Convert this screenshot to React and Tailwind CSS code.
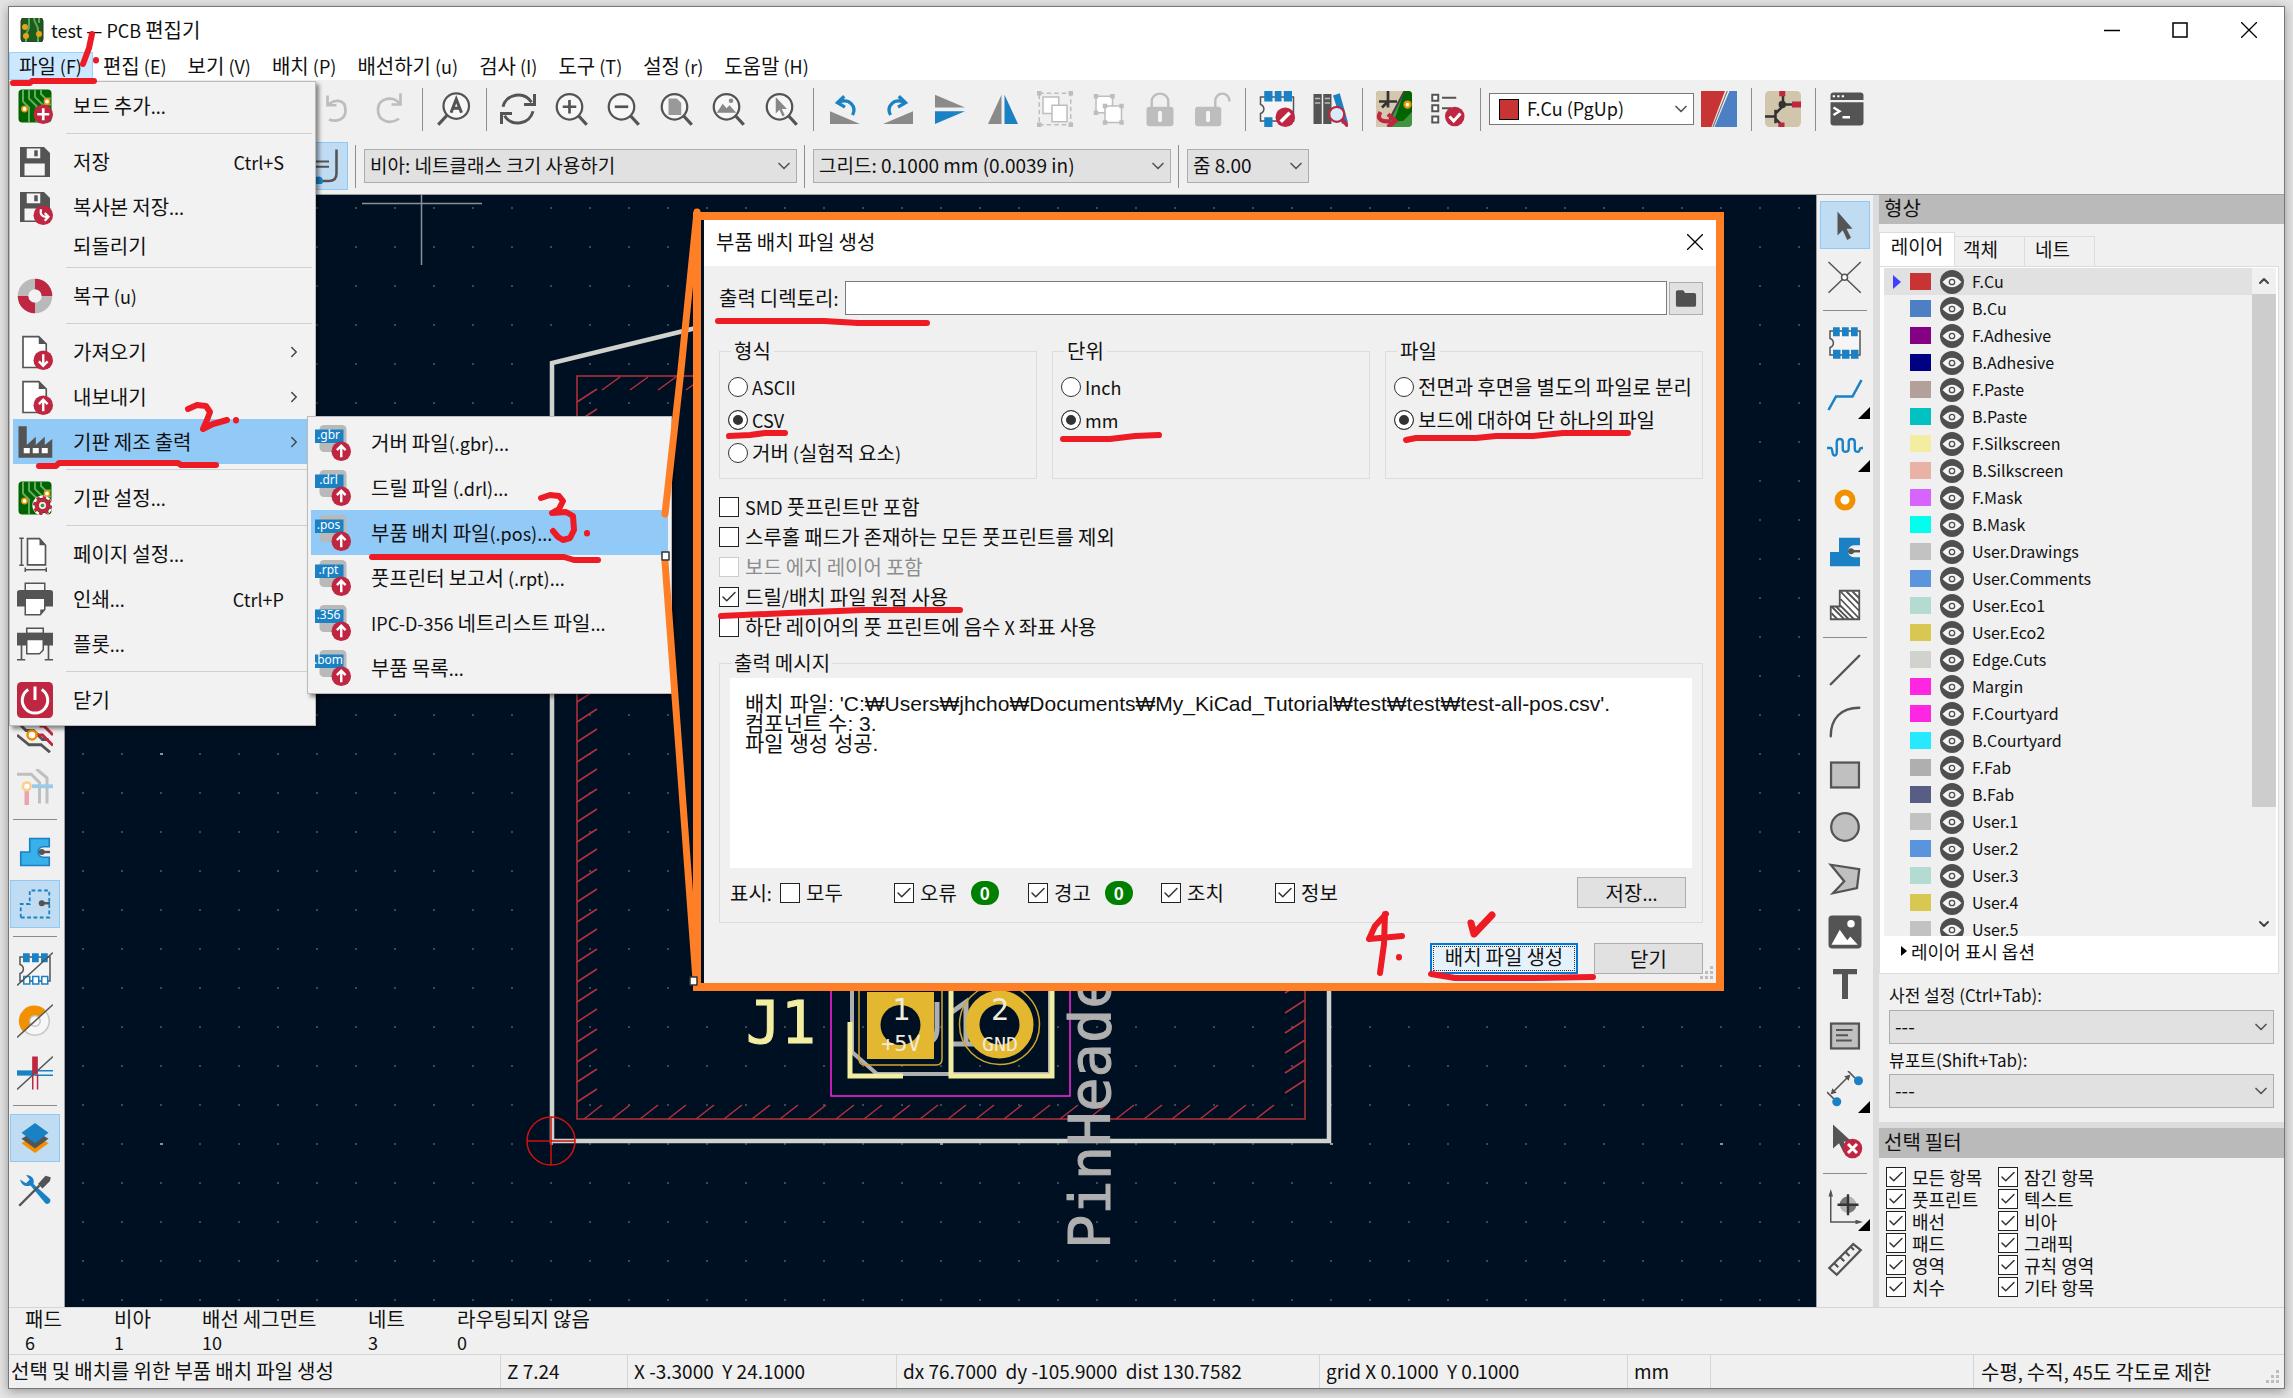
import React from 'react';
import { Check, ChevronDown, ChevronRight, ChevronUp } from 'lucide-react';

const GREY = '#545454';
const BLUE = '#1a81c4';
const RED = '#bf2641';
const ORANGE = '#f29100';

const menus = ['파일 (F)', '편집 (E)', '보기 (V)', '배치 (P)', '배선하기 (u)', '검사 (I)', '도구 (T)', '설정 (r)', '도움말 (H)'];

const layers = [
  ['F.Cu', '#c83434'],
  ['B.Cu', '#4d7fc4'],
  ['F.Adhesive', '#840084'],
  ['B.Adhesive', '#000084'],
  ['F.Paste', '#b4a09a'],
  ['B.Paste', '#00c2c2'],
  ['F.Silkscreen', '#f2eda1'],
  ['B.Silkscreen', '#e8b2a7'],
  ['F.Mask', '#d864ff'],
  ['B.Mask', '#02ffee'],
  ['User.Drawings', '#c2c2c2'],
  ['User.Comments', '#5994dc'],
  ['User.Eco1', '#b4dbd2'],
  ['User.Eco2', '#d8c852'],
  ['Edge.Cuts', '#d0d2cd'],
  ['Margin', '#ff26e2'],
  ['F.Courtyard', '#ff26e2'],
  ['B.Courtyard', '#26e9ff'],
  ['F.Fab', '#afafaf'],
  ['B.Fab', '#585d84'],
  ['User.1', '#c2c2c2'],
  ['User.2', '#5994dc'],
  ['User.3', '#b4dbd2'],
  ['User.4', '#d8c852'],
  ['User.5', '#c2c2c2'],
];

const filters = ['모든 항목', '잠긴 항목', '풋프린트', '텍스트', '배선', '비아', '패드', '그래픽', '영역', '규칙 영역', '치수', '기타 항목'];

const counts = [
  ['패드', '6', 'w-[89px]'],
  ['비아', '1', 'w-[88px]'],
  ['배선 세그먼트', '10', 'w-[166px]'],
  ['네트', '3', 'w-[89px]'],
  ['라우팅되지 않음', '0', ''],
];

// Hangul is set a step larger than the Latin text next to it
const Ko = ({ children }) =>
  children.split(/([가-힣]+)/).map((part, i) =>
    i % 2 ? <span key={i} className="text-[20px]">{part}</span> : part
  );

const Svg = ({ children, className = 'size-9' }) => (
  <svg viewBox="0 0 24 24" fill="none" className={`shrink-0 ${className}`} aria-hidden="true">
    {children}
  </svg>
);

/* ---------- icons ---------- */

const PcbBase = () => (
  <>
    <rect x="1" y="1" width="22" height="22" rx="2.5" fill="#006400" />
    <path d="M8 1v6l5 5v11M12 1v5l5 5h6M4 1v8l4 4v10M16 1v3l3 3h4" stroke="#62ad62" strokeWidth="1.3" />
    <circle cx="5" cy="14" r="1.8" fill="#fff" stroke={ORANGE} strokeWidth="1" />
    <circle cx="20" cy="9" r="1.8" fill="#fff" stroke={ORANGE} strokeWidth="1" />
  </>
);

const Badge = ({ children }) => (
  <>
    <circle cx="17.5" cy="17.5" r="6.5" fill={RED} />
    {children}
  </>
);

const ArrowUpBadge = () => (
  <Badge><path d="M17.5 21.5v-7.5M14.6 16.8l2.9-3 2.9 3" stroke="#fff" strokeWidth="1.6" /></Badge>
);

const Floppy = () => (
  <>
    <path d="M2 2h16l4 4v16H2z" fill={GREY} />
    <path d="M6.5 3h9v6.5h-9zM5 13h13.5v8H5z" fill="#f5f5f5" />
    <path d="M11.5 4.2h2.3v4h-2.3z" fill={GREY} />
  </>
);

const Sheet = () => (
  <>
    <path d="M4 1.7h10.5l5 5v15.6H4z" fill="#fff" stroke={GREY} strokeWidth="1.1" />
    <path d="M14.5 1.7v5h5z" fill={GREY} />
  </>
);

const Lens = ({ children }) => (
  <>
    <circle cx="11" cy="10.5" r="8.5" stroke={GREY} strokeWidth="1.5" fill="#f7f7f7" />
    <path d="m17 16.5 5.5 6" stroke={GREY} strokeWidth="2.2" />
    {children}
  </>
);

const Footprint = ({ hollow }) => (
  <>
    <path d="M2 4h20v16H2v-5c3-1 3-5 0-6z" fill="#f5f5f5" stroke={GREY} strokeWidth="1" />
    <path d="M4 1.5h4.5v6H4zM10 1.5h4.5v6H10zM16 1.5h4.5v6H16z" fill={BLUE} />
    <path d="M4.5 17h4v5h-4zM10.5 17h4v5h-4zM16.5 17h4v5h-4z" fill={hollow ? '#fff' : BLUE} stroke={BLUE} />
  </>
);

const icons = {
  app: <><rect x="1" y="0" width="22" height="24" rx="3" fill="#1c5c1c" stroke="#333" /><path d="M9 0v10l-3 6v8M14 0c0 6 4 6 4 12v12M19 0v5" stroke="#5da75d" strokeWidth="2" /><circle cx="5" cy="9" r="3" fill="#e8a11c" /><circle cx="6" cy="18" r="3" fill="#e8a11c" /><circle cx="19" cy="16" r="3" fill="#e8a11c" /></>,
  addBoard: <><PcbBase /><Badge><path d="M17.5 13.5v8M13.5 17.5h8" stroke="#fff" strokeWidth="1.8" /></Badge></>,
  save: <Floppy />,
  saveCopy: <><Floppy /><Badge><path d="M16 13.5c-1 4 1.5 5.5 4.5 5M18.5 16l2.5 2.5-2.5 2.7" stroke="#fff" strokeWidth="1.5" /></Badge></>,
  rescue: <><circle cx="12" cy="12" r="8" stroke="#b9b9b9" strokeWidth="7" /><path d="M12 4a8 8 0 0 1 8 8M12 20a8 8 0 0 1-8-8" stroke={RED} strokeWidth="7" /></>,
  importFile: <><Sheet /><Badge><path d="M17.5 13.5v7.5M14.6 18.2l2.9 3 2.9-3" stroke="#fff" strokeWidth="1.6" /></Badge></>,
  exportFile: <><Sheet /><ArrowUpBadge /></>,
  fab: <><path d="M1 22.5V1.5h5.5V14l6-5.5V14l6-5.5V14l5-4v12.5z" fill={GREY} /><path d="M4.5 16h4v3.5h-4zM10.5 16h4v3.5h-4zM16.5 16h4v3.5h-4z" fill="#fff" /></>,
  boardSetup: <><PcbBase /><circle cx="17" cy="17" r="6" stroke="#fff" strokeWidth="1.5" /><circle cx="17" cy="17" r="3.5" fill="#fff" stroke={RED} strokeWidth="2.4" /><circle cx="17" cy="17" r="5.3" stroke={RED} strokeWidth="2.2" strokeDasharray="2.2 1.96" /><circle cx="17" cy="17" r="1.3" fill="#3a9a3a" /></>,
  page: <><path d="M7 1.7h8l4 4.5v13H7z" fill="#fff" stroke={GREY} strokeWidth="1.1" /><path d="M15 1.7v4.5h4z" fill={GREY} /><path d="M3 2v17.5M1.5 1.5h3M1.5 19.5h3M6 22.5h13M5.5 21v3M19.5 21v3" stroke={GREY} strokeWidth="1" /></>,
  print: <><path d="M5.5 1.5h13V7h-13z" fill="#f5f5f5" stroke={GREY} /><path d="M0 7.5C0 6.5 1 6 2 6h20c1 0 2 .5 2 1.5V17H0z" fill={GREY} /><path d="M5.5 11.5h13V19l-3 3.5h-10z" fill="#fff" stroke={GREY} /><path d="m15.5 22.5v-3.5h3z" fill={GREY} /></>,
  plot: <><path d="M6.5 1.5h11V5h-11z" fill="#f5f5f5" stroke={GREY} /><path d="M0 4.5h24V13H0z" fill={GREY} /><path d="M6.5 9h11v7l-2.5 2.5h-8.5z" fill="#fff" stroke={GREY} /><path d="M3 12v10.5M21 12v10.5M0 22.5h5.5M18.5 22.5H24" stroke={GREY} strokeWidth="1.1" /></>,
  quit: <><rect x="0" y="0" width="24" height="24" rx="3" fill={RED} /><path d="M7.5 5a8.5 8.5 0 1 0 9 0M12 3v9" stroke="#fff" strokeWidth="2" /></>,
  undo: <path d="M7 3v6.5h6M7.5 9.5C10 6 19 4 19 13c0 6-6 8-11 6" stroke="#bdbdbd" strokeWidth="1.8" />,
  redo: <path d="M19 1.5V9h-6M18.5 8.5C15 3 4 4 4 12.5c0 8 8 10 14 6" stroke="#bdbdbd" strokeWidth="1.8" />,
  find: <><circle cx="13.5" cy="10" r="8.5" stroke={GREY} strokeWidth="1.5" fill="#f7f7f7" /><path d="m7.5 16-6 6.5" stroke={GREY} strokeWidth="2.2" /><path d="M10 14.5 13.5 5.5 17 14.5M11.3 11.5h4.5" stroke={GREY} strokeWidth="2" /></>,
  refresh: <><path d="M2 10.5C4 2 16-.5 21 7.5M22 13.5C20 22 8 24.5 3 16.5" stroke={GREY} strokeWidth="2" /><path d="M23 2v7h-7M1 22v-7h7" stroke={GREY} strokeWidth="2" /></>,
  zoomIn: <Lens><path d="M11 6v9M6.5 10.5h9" stroke={GREY} strokeWidth="1.8" /></Lens>,
  zoomOut: <Lens><path d="M6.5 10.5h9" stroke={GREY} strokeWidth="1.8" /></Lens>,
  zoomPage: <Lens><path d="M7 5h5.5l3 3v8H7z" fill="#999" /></Lens>,
  zoomObjects: <Lens><path d="m4.5 14.5 4-6 2.5 3 2-2 4.5 5z" fill="#888" /><circle cx="14" cy="6.5" r="1.5" fill="#888" /></Lens>,
  zoomSel: <Lens><path d="M8.5 4v11l2.5-2.5 2 4.5 1.5-1-2-4h3.5z" fill="#888" /></Lens>,
  rotL: <><path d="M2 13.5V22h20z" fill="#8a8a8a" /><path d="M8 7.5c7-3 12 3 9 8.5M11.5 3.5 7 7.8l5 3" stroke={BLUE} strokeWidth="2.2" /></>,
  rotR: <><path d="M22 13.5V22H2z" fill="#8a8a8a" /><path d="M16 7.5c-7-3-12 3-9 8.5M12.5 3.5 17 7.8l-5 3" stroke={BLUE} strokeWidth="2.2" /></>,
  flipV: <><path d="M2 2.5 22 11H2z" fill="#8a8a8a" /><path d="M2 22 22 13.5H2z" fill={BLUE} /></>,
  flipH: <><path d="M11 2.5V22H2z" fill="#8a8a8a" /><path d="M13 2.5V22h9z" fill={BLUE} /></>,
  group: <><rect x="1.5" y="1.5" width="21" height="21" stroke="#bdbdbd" strokeDasharray="3 2" /><path d="M4 4h10.5v11H4z" fill="#fff" stroke="#bdbdbd" /><path d="M10 9.5h10v11H10z" fill="#fff" stroke="#bdbdbd" /><path d="M0 0h3v3H0zM21 0h3v3h-3zM0 21h3v3H0zM21 21h3v3h-3z" fill="#bdbdbd" /></>,
  ungroup: <><path d="M4 3.5h11v11H4z" fill="#fff" stroke="#bdbdbd" /><path d="M10 10h11v11H10z" fill="#fff" stroke="#bdbdbd" /><path d="M2.5 2h3v3h-3zM13.5 2h3v3h-3zM2.5 13h3v3h-3zM8.5 8.5h3v3h-3zM19.5 8.5h3v3h-3zM8.5 19.5h3v3h-3zM19.5 19.5h3v3h-3z" fill="#bdbdbd" /></>,
  lock: <><path d="M6.5 11V7c0-7 11-7 11 0v4" stroke="#bdbdbd" strokeWidth="1.6" /><rect x="3" y="10.5" width="18" height="13" rx="2" fill="#bdbdbd" /><path d="M12 14.5v5" stroke="#f5f5f5" strokeWidth="2.6" strokeLinecap="round" /></>,
  unlock: <><path d="M13.5 11V7c0-7 9.5-7 9.5 0" stroke="#bdbdbd" strokeWidth="1.6" /><rect x="0" y="10.5" width="17.5" height="13" rx="2" fill="#bdbdbd" /><path d="M8.7 14.5v5" stroke="#f5f5f5" strokeWidth="2.6" strokeLinecap="round" /></>,
  fpEdit: <><path d="M1 4h22v16H1v-5c3-1 3-5 0-6z" fill="#f5f5f5" stroke={GREY} /><path d="M3.5 0H9v7H3.5zM10.5 0h4.5v7h-4.5zM16.5 0H22v7h-5.5zM3.5 17.5H9V24H3.5z" fill={BLUE} /><circle cx="17.5" cy="17.5" r="6.5" fill={RED} /><path d="m14.5 20.5 6-6" stroke="#fff" strokeWidth="2.4" /></>,
  fpLib: <><path d="M1 2h5.5v20H1zM7.5 2H13v20H7.5z" fill={GREY} /><path d="m14 3 4.5-1.5L24 21l-4 1z" fill={BLUE} /><path d="M2 5h3.5M2 8h3.5M8.5 5H12M8.5 8H12" stroke="#bbb" /><circle cx="16.5" cy="15.5" r="5" fill="#d8ecf8" stroke={RED} strokeWidth="1.5" /><path d="m20 19 4 4.5" stroke={RED} strokeWidth="2.6" /></>,
  update: <><rect width="24" height="24" rx="2.5" fill="#3f9440" /><path d="M19 0h2.5A2.5 2.5 0 0 1 24 2.5V14l-6 6h-6z" fill="#006400" /><circle cx="21" cy="9" r="2" fill="#fff" stroke={ORANGE} strokeWidth="1.5" /><path d="M0 2.5A2.5 2.5 0 0 1 2.5 0H19L7 24H0z" fill="#d4c7ae" /><path d="M2 7h12M8 0v11M8 7l-4 4" stroke="#333" strokeWidth="1.8" /><path d="M19 0 9 19" stroke="#444" strokeWidth="1.4" /><path d="M3 14c-3 5 1 7 7 6M8 15.5l5 4.5-5 4" stroke={RED} strokeWidth="2.8" /></>,
  drc: <><path d="M1.5 2.5h4v4h-4zM1.5 9.5h4v4h-4zM1.5 17h4v4h-4z" stroke={GREY} strokeWidth="1.3" fill="#fff" /><path d="M8 4.5h9.5M8 11.5h6" stroke={GREY} strokeWidth="1.4" /><circle cx="16.5" cy="17" r="6.5" fill={RED} /><path d="m13 17 2.8 3 4.5-5" stroke="#fff" strokeWidth="2" /></>,
  layerPair: <><path d="M0 0h16L7 24H0z" fill="#c83434" /><path d="M19 0h5v24H9z" fill="#4d7fc4" /><path d="M17.5 0 8 24" stroke="#777" strokeWidth=".8" /></>,
  router: <><rect width="24" height="24" rx="3" fill="#d1c5ab" /><path d="M0 17h7M7 12.5v9M7 15l5-5V3M12 9h7M7 18.5l3 3V24" stroke="#333" strokeWidth="1.7" /><circle cx="11.5" cy="9" r="2.5" fill="#333" /><path d="M9.5 0h4v3.5h-4zM18 7h6v4h-6zM9 21h4v3H9z" fill={RED} /></>,
  console: <><path d="M1 3a2 2 0 0 1 2-2h18a2 2 0 0 1 2 2v3H1zM1 7.5h22V21a2 2 0 0 1-2 2H3a2 2 0 0 1-2-2z" fill={GREY} /><path d="M2.5 3.5h1.5M5.5 3.5H7M8.5 3.5H10" stroke="#fff" strokeWidth="1.4" /><path d="m3 11 4 2.5L3 16M9 17.5h5" stroke="#fff" strokeWidth="1.6" /></>,
  trackWidth: <><path d="M3 9h13M3 12.5h13" stroke={GREY} strokeWidth="1.4" /><path d="M21 1v16c0 4-2 5-5 5H9" stroke={GREY} strokeWidth="1.7" /><circle cx="9" cy="22" r="3" fill={BLUE} /></>,
  contrast: <><path d="M0 3l6 6h5l6 6h4M0 12l8 6.5h8l6 5" stroke={GREY} strokeWidth="1.9" /><path d="M12 12h5l7 7M15 6h3l6 6" stroke={RED} strokeWidth="1.9" /><circle cx="10" cy="12" r="3" fill="#fff" stroke={ORANGE} strokeWidth="1.7" /></>,
  netColor: <><path d="M0 3.5h9.5L15 9v14M13 0l7 6v17" stroke="#bfbfbf" strokeWidth="2" /><path d="M10 11.5h14" stroke="#9ccbe8" strokeWidth="2.6" /><path d="M6.5 14v10" stroke="#eba4ae" strokeWidth="3" /><circle cx="6.5" cy="11.5" r="2.6" fill="#fff" stroke="#fbd08a" strokeWidth="1.7" /></>,
  zoneFill: <><path d="M2.5 21v-9h6V3h13v5.5h-4a3.5 3.5 0 0 0 0 7h4V21z" fill="#38b1ea" stroke={BLUE} strokeWidth="1.1" /><path d="M16 12h6" stroke={GREY} strokeWidth="1.6" /><circle cx="16.5" cy="12" r="2" fill={GREY} /></>,
  zoneOutline: <><path d="M2.5 21v-9h6V3h13v18z" stroke={BLUE} strokeWidth="1.2" strokeDasharray="2.5 1.7" /><path d="M16 11.5h6" stroke={GREY} strokeWidth="1.6" /><circle cx="16.5" cy="11.5" r="2" fill={GREY} /></>,
  fpSketch: <><Footprint hollow /><path d="M0 23 24 1" stroke={GREY} /></>,
  viaSketch: <><circle cx="12" cy="12" r="9.5" stroke="#c4c4c4" fill="#f7f7f7" /><path d="M4 19A9.5 9.5 0 0 1 19 5z" fill={ORANGE} /><circle cx="12" cy="12" r="3.5" fill="#f7f7f7" stroke="#c4c4c4" /><path d="M0 23 24 1" stroke={GREY} /></>,
  trackSketch: <><path d="M0 12h12" stroke={BLUE} strokeWidth="3.5" /><path d="M12 10.5h12M12 13.5h12" stroke={BLUE} /><path d="M12 1v12" stroke={RED} strokeWidth="3.8" /><path d="M10.5 13v10M13.7 13v10" stroke={RED} /><path d="M0 23 24 1" stroke={GREY} /></>,
  layersIcon: <><path d="m12 10 9 5.5-9 6.5-9-6.5z" fill={ORANGE} /><path d="m12 7 9 5.5-9 6.5-9-6.5z" fill={GREY} /><path d="m12 2 9 6.5-9 7-9-7z" fill={BLUE} /></>,
  tools: <><path d="M2 5c1 4 4 5 7 4l10 12c2 1 4-1 3-3L11 8c1-3-1-6-5-6l2.5 3L6 7.5z" fill={BLUE} /><path d="M1.5 22.5 15 9" stroke={GREY} strokeWidth="1.6" /><path d="m14 8 5-5.5 3.5 1L22 6l-5 5z" fill={GREY} /></>,
  cursor: <path d="M7 3v16l3.5-3.5 3 6.5 2.500-1.500-3-6h4z" fill={GREY} />,
  ratsnest: <><path d="M1 2 22.5 22.5M22.5 2 1 22.5" stroke={GREY} strokeWidth="1" /><circle cx="11.7" cy="12.2" r="2" fill="#fff" stroke={GREY} /></>,
  footprint: <Footprint />,
  route: <path d="M1 22l5-9h11l6-11" stroke={BLUE} strokeWidth="1.7" />,
  tune: <path d="M0 12h2.5c1.5 0 .5 5 2.5 5s1.5-3 1.5-6-.5-5 2-5 2 2 2 5 0 3.5 2 3.5 2-1 2-4-.5-4.5 2-4.5 2 2 2 5 0 3.5 2 3.5.5-2.5 2.5-2.5H24" stroke={BLUE} strokeWidth="1.6" />,
  via: <circle cx="12" cy="12" r="5" stroke={ORANGE} strokeWidth="4" fill="#fff" />,
  zone: <><path d="M2 21.5v-9.5h6V2.5h14v5h-4a4 4 0 0 0 0 8h4v6z" fill={BLUE} /><path d="M16 11.5h6" stroke={GREY} strokeWidth="1.6" /><circle cx="16" cy="11.5" r="2" fill={GREY} /></>,
  keepout: <><path d="M2.5 21.5v-8.5h6V2.5h13v19z" fill="#fff" stroke={GREY} strokeWidth="1.2" /><path d="m9 3 12.5 13M9 8l12.5 13M13 3l8.5 8.5M17 3l4.5 4.5M8.5 12l9.5 9.5M3 13l8.5 8.5M3 17.5l4 4M6 13l8.5 8.5" stroke={GREY} strokeWidth="1.2" /></>,
  line: <path d="M2.5 21.5 21.5 2.5" stroke={GREY} strokeWidth="1.6" strokeLinecap="round" />,
  arc: <path d="M2.5 21.5c0-12 7-19 19-19" stroke={GREY} strokeWidth="1.6" strokeLinecap="round" />,
  rect: <rect x="2.7" y="3.7" width="18.6" height="16.6" fill="#c0c0c0" stroke={GREY} strokeWidth="1.5" />,
  circle: <circle cx="12" cy="12" r="9.2" fill="#c0c0c0" stroke={GREY} strokeWidth="1.5" />,
  polygon: <path d="m2.5 2.5 19 3-1.5 12.5-16 3.5 7.5-8z" fill="#c0c0c0" stroke={GREY} strokeWidth="1.5" />,
  image: <><rect x="1" y="1" width="22" height="22" rx="2.5" fill={GREY} /><path d="m3 20.5 5.5-10 5 7 2-2.5 5 5.5z" fill="#fff" /><circle cx="16" cy="6.5" r="2.5" fill="#fff" /></>,
  text: <path d="M4 2h16v3.5h-6V22h-4V5.5H4z" fill={GREY} />,
  textbox: <><rect x="2.7" y="3.7" width="18.6" height="16.6" fill="#c0c0c0" stroke={GREY} strokeWidth="1.5" /><path d="M6 8h11M6 11.5h8M6 15h10.5" stroke={GREY} strokeWidth="1.2" /></>,
  dimension: <><path d="M0 14l6 6M14 0l6 6M3 15 15 3" stroke={GREY} strokeWidth="1.1" /><path d="m2.5 15.5 1-4 3 3zM15.5 2.5l-1 4-3-3z" fill={GREY} /><circle cx="6.5" cy="20.5" r="3" fill={BLUE} /><circle cx="21" cy="6.5" r="3" fill={BLUE} /></>,
  deleteTool: <><path d="M4 1v16l4-3.5 3 6 3-1.5-3-5.5 5-.5z" fill={GREY} /><circle cx="17" cy="17" r="6.5" fill={RED} /><path d="m14 14 6 6M20 14l-6 6" stroke="#fff" strokeWidth="2" /></>,
  origin: <><path d="M2.5 2v20H22" stroke={GREY} strokeWidth="1" /><path d="m2.5 0 1.5 5H1zM24 22l-5 1.5v-3z" fill={GREY} /><circle cx="14" cy="10.5" r="5.5" fill="#b5b5b5" /><path d="M14 10.5V5a5.5 5.5 0 0 0-5.5 5.5zM14 10.5V16a5.5 5.5 0 0 0 5.5-5.5z" fill="#777" /><path d="M14 3.5v14M7 10.5h14" stroke="#333" strokeWidth="1.6" /></>,
  measure: <path d="m1.5 18 16-16L22.5 6l-16 16.5zM5 15l2.5 2.5M9 11l2.5 2.5M12.5 7.5 15 10M16 4l2 2" stroke={GREY} strokeWidth="1.5" />,
};

const FileTag = ({ ext }) => (
  <Svg>
    <rect x="3" y="0" width="18" height="18" rx="3" fill="#b9b9b9" />
    <rect x="0" y="3" width="19" height="9" fill={BLUE} />
    <text x="9" y="9.5" fontSize="8" fill="#fff" textAnchor="middle" fontFamily="Noto Sans">{ext}</text>
    <ArrowUpBadge />
  </Svg>
);

/* ---------- shared controls ---------- */

const ToolButton = ({ icon }) => (
  <button type="button" aria-label={icon} className="flex size-9 shrink-0 items-center justify-center">
    <Svg>{icons[icon]}</Svg>
  </button>
);

const SideButton = ({ icon, active, flyout }) => (
  <button
    type="button"
    aria-label={icon}
    className={`relative flex h-12 w-[50px] shrink-0 items-center justify-center border ${active ? 'border-[#90c8f6] bg-[#c0dcf3]' : 'border-transparent'}`}
  >
    <Svg>{icons[icon]}</Svg>
    {flyout && (
      <svg viewBox="0 0 12 12" className="absolute -right-px -bottom-px size-3"><path d="M12 0v12H0z" fill="#000" /></svg>
    )}
  </button>
);

const SideRule = () => <div className="my-1 h-px w-11 shrink-0 bg-[#8a8a8a]" />;

const BarRule = ({ tight }) => (
  <div className={`h-[43px] w-px shrink-0 bg-[#8e8e8e] ${tight ? 'mr-2 ml-[7px]' : 'mr-[13px] ml-[14px]'}`} />
);

const Dropdown = ({ label, value, className = '' }) => (
  <div className={`grid shrink-0 items-center ${className}`}>
    <select aria-label={label} defaultValue={value} className="col-start-1 row-start-1 h-[34px] w-full appearance-none border border-[#adadad] bg-[#e1e1e1] pb-[2px] pl-[5px] text-[19px]">
      <option>{value}</option>
    </select>
    <ChevronDown className="pointer-events-none col-start-1 row-start-1 mr-[3px] size-5 justify-self-end text-[#555]" strokeWidth={2} />
  </div>
);

const CheckItem = ({ label, checked, disabled, small, className = '' }) => (
  <label className={`flex items-center gap-[6px] ${small ? 'text-[18px]' : ''} ${disabled ? 'text-[#8d8d8d]' : ''} ${className}`}>
    <span className="grid shrink-0 place-items-center">
      <input
        type="checkbox"
        defaultChecked={checked}
        disabled={disabled}
        className={`col-start-1 row-start-1 size-5 appearance-none border bg-white ${disabled ? 'border-[#ccc]' : 'border-[#222]'}`}
      />
      {checked && <Check className="pointer-events-none col-start-1 row-start-1 size-[18px] text-[#333]" strokeWidth={2} />}
    </span>
    <span>{small ? label : <Ko>{label}</Ko>}</span>
  </label>
);

const RadioItem = ({ name, label, checked }) => (
  <label className="flex h-[33px] items-center gap-1">
    <input
      type="radio"
      name={name}
      defaultChecked={checked}
      className="size-5 shrink-0 appearance-none rounded-full border border-[#333] bg-white checked:bg-[#333] checked:shadow-[inset_0_0_0_4px_white]"
    />
    <span><Ko>{label}</Ko></span>
  </label>
);

const RadioGroup = ({ name, title, options, value }) => (
  <fieldset className="border border-[#dcdcdc] px-2 pb-[9px]">
    <legend className="ml-[3px] h-6 px-[3px] leading-[23px]"><Ko>{title}</Ko></legend>
    <div className="pt-[7px]">
      {options.map((o) => <RadioItem key={o} name={name} label={o} checked={o === value} />)}
    </div>
  </fieldset>
);

/* ---------- file menu ---------- */

const MenuRow = ({ icon, label, shortcut, sub, active, short }) => (
  <li>
    <button type="button" className={`flex w-full items-center pl-1 text-left ${short ? 'h-[33px]' : 'h-[45px]'} ${active ? 'bg-[#91c9f7]' : ''}`}>
      <span className="w-14 shrink-0">{icon}</span>
      <span className="flex-1 whitespace-nowrap"><Ko>{label}</Ko></span>
      {shortcut && <span className="mr-7">{shortcut}</span>}
      {sub && <ChevronRight className="mr-[9px] size-[18px] text-[#444]" strokeWidth={2} />}
    </button>
  </li>
);

const MenuRule = () => <li className="ml-[53px] flex h-[11px] items-center"><span className="h-px w-full bg-[#d0d0d0]" /></li>;

const ic = (name) => <Svg>{icons[name]}</Svg>;

const FileMenu = () => (
  <ul className="absolute top-[29px] left-0 z-20 w-[307px] border border-[#bbb] bg-[#f2f2f2] px-[3px] pt-px pb-[3px] shadow-[3px_3px_4px_rgba(0,0,0,0.45)]">
    <MenuRow icon={ic('addBoard')} label="보드 추가..." />
    <MenuRule />
    <MenuRow icon={ic('save')} label="저장" shortcut="Ctrl+S" />
    <MenuRow icon={ic('saveCopy')} label="복사본 저장..." />
    <MenuRow label="되돌리기" short />
    <MenuRule />
    <MenuRow icon={ic('rescue')} label="복구 (u)" />
    <MenuRule />
    <MenuRow icon={ic('importFile')} label="가져오기" sub />
    <MenuRow icon={ic('exportFile')} label="내보내기" sub />
    <MenuRow icon={ic('fab')} label="기판 제조 출력" sub active />
    <MenuRule />
    <MenuRow icon={ic('boardSetup')} label="기판 설정..." />
    <MenuRule />
    <MenuRow icon={ic('page')} label="페이지 설정..." />
    <MenuRow icon={ic('print')} label="인쇄..." shortcut="Ctrl+P" />
    <MenuRow icon={ic('plot')} label="플롯..." />
    <MenuRule />
    <MenuRow icon={ic('quit')} label="닫기" />
  </ul>
);

const FabMenu = () => (
  <ul className="absolute top-[364px] left-[298px] z-30 w-[365px] border border-[#bbb] bg-[#f2f2f2] p-[3px] shadow-[3px_3px_4px_rgba(0,0,0,0.45)]">
    <MenuRow icon={<FileTag ext=".gbr" />} label="거버 파일(.gbr)..." />
    <MenuRow icon={<FileTag ext=".drl" />} label="드릴 파일 (.drl)..." />
    <MenuRow icon={<FileTag ext=".pos" />} label="부품 배치 파일(.pos)..." active />
    <MenuRow icon={<FileTag ext=".rpt" />} label="풋프린터 보고서 (.rpt)..." />
    <MenuRow icon={<FileTag ext=".356" />} label="IPC-D-356 네트리스트 파일..." />
    <MenuRow icon={<FileTag ext=".bom" />} label="부품 목록..." />
  </ul>
);

/* ---------- window chrome ---------- */

const TitleBar = () => (
  <div className="flex h-[45px] items-center bg-white pl-[11px]">
    <Svg className="size-6">{icons.app}</Svg>
    <span className="ml-[7px] flex-1"><Ko>test — PCB 편집기</Ko></span>
    <button type="button" aria-label="최소화" className="flex w-[68px] justify-center"><svg viewBox="0 0 16 16" className="size-4"><path d="M0 8.5h16" stroke="#000" strokeWidth="1.5" /></svg></button>
    <button type="button" aria-label="최대화" className="flex w-[68px] justify-center"><svg viewBox="0 0 16 16" className="size-4"><rect x="1" y="1" width="14" height="14" fill="none" stroke="#000" strokeWidth="1.5" /></svg></button>
    <button type="button" aria-label="창 닫기" className="flex w-[70px] justify-center"><svg viewBox="0 0 16 16" className="size-4"><path d="m0 0 16 16M16 0 0 16" stroke="#000" strokeWidth="1.3" /></svg></button>
  </div>
);

const MenuBar = () => (
  <nav className="relative flex h-7 items-center bg-white">
    {menus.map((m, i) => (
      <button
        key={m}
        type="button"
        className={`flex h-7 items-center border pr-[10px] pl-[9px] whitespace-nowrap ${i === 0 ? 'border-[#99d1ff] bg-[#cce8ff]' : 'border-transparent'}`}
      >
        <span><Ko>{m}</Ko></span>
      </button>
    ))}
    <FileMenu />
    <FabMenu />
  </nav>
);

const MainToolbar = () => (
  <div className="flex h-[58px] items-center pl-[308px]">
    <div className="flex w-[91px] shrink-0 justify-between"><ToolButton icon="undo" /><ToolButton icon="redo" /></div>
    <BarRule />
    <ToolButton icon="find" />
    <BarRule />
    <div className="flex w-[299px] shrink-0 justify-between">
      {['refresh', 'zoomIn', 'zoomOut', 'zoomPage', 'zoomObjects', 'zoomSel'].map((n) => <ToolButton key={n} icon={n} />)}
    </div>
    <BarRule />
    <div className="flex w-[404px] shrink-0 justify-between">
      {['rotL', 'rotR', 'flipV', 'flipH', 'group', 'ungroup', 'lock', 'unlock'].map((n) => <ToolButton key={n} icon={n} />)}
    </div>
    <BarRule />
    <div className="flex w-[89px] shrink-0 justify-between"><ToolButton icon="fpEdit" /><ToolButton icon="fpLib" /></div>
    <BarRule />
    <div className="flex w-[90px] shrink-0 justify-between"><ToolButton icon="update" /><ToolButton icon="drc" /></div>
    <div className="mr-2 ml-[14px] h-[43px] w-px shrink-0 bg-[#8e8e8e]" />
    <div className="mr-[7px] grid w-[205px] shrink-0 items-center">
      <select aria-label="활성 레이어" className="col-start-1 row-start-1 h-8 w-full appearance-none border border-[#777] bg-white pb-[2px] pl-[37px] text-[18px]">
        <option>F.Cu (PgUp)</option>
      </select>
      <span className="pointer-events-none col-start-1 row-start-1 ml-[10px] h-[21px] w-5 border border-black bg-[#c83434]" />
      <ChevronDown className="pointer-events-none col-start-1 row-start-1 mr-[3px] size-5 justify-self-end text-[#555]" strokeWidth={2} />
    </div>
    <ToolButton icon="layerPair" />
    <BarRule />
    <ToolButton icon="router" />
    <BarRule />
    <ToolButton icon="console" />
  </div>
);

const OptionsToolbar = () => (
  <div className="flex h-14 items-center pl-[289px]">
    <SideButton icon="trackWidth" active />
    <BarRule tight />
    <Dropdown label="비아 크기" value="비아: 네트클래스 크기 사용하기" className="w-[433px]" />
    <BarRule tight />
    <Dropdown label="그리드" value="그리드: 0.1000 mm (0.0039 in)" className="w-[358px]" />
    <BarRule tight />
    <Dropdown label="줌" value="줌 8.00" className="w-[122px]" />
  </div>
);

const LeftToolbar = () => (
  <div className="flex w-14 shrink-0 flex-col items-center justify-end gap-1 border-r border-[#a0a0a0] pr-1 pb-[93px]">
    <SideButton icon="contrast" />
    <SideButton icon="netColor" />
    <SideRule />
    <SideButton icon="zoneFill" />
    <SideButton icon="zoneOutline" active />
    <SideRule />
    <SideButton icon="fpSketch" />
    <SideButton icon="viaSketch" />
    <SideButton icon="trackSketch" />
    <SideRule />
    <SideButton icon="layersIcon" active />
    <SideButton icon="tools" />
  </div>
);

const RightToolbar = () => (
  <div className="flex w-[57px] shrink-0 flex-col items-center justify-between border-l border-[#a0a0a0] pt-[6px] pb-6">
    <SideButton icon="cursor" active />
    <SideButton icon="ratsnest" />
    <SideRule />
    <SideButton icon="footprint" />
    <SideButton icon="route" flyout />
    <SideButton icon="tune" flyout />
    <SideButton icon="via" />
    <SideButton icon="zone" />
    <SideButton icon="keepout" />
    <SideRule />
    <SideButton icon="line" />
    <SideButton icon="arc" />
    <SideButton icon="rect" />
    <SideButton icon="circle" />
    <SideButton icon="polygon" />
    <SideButton icon="image" />
    <SideButton icon="text" />
    <SideButton icon="textbox" />
    <SideButton icon="dimension" flyout />
    <SideButton icon="deleteTool" />
    <SideRule />
    <SideButton icon="origin" flyout />
    <SideButton icon="measure" />
  </div>
);

/* ---------- board canvas ---------- */

const range = (n) => Array.from({ length: n }, (_, i) => i);

const Board = () => (
  <main className="relative min-w-0 flex-1 overflow-hidden bg-[#001023]">
    {/* coordinates are window pixels, shifted to the canvas origin */}
    <svg className="absolute inset-0 size-full" aria-label="PCB">
      <defs>
        <pattern id="dots" x="17" y="12" width="39" height="39" patternUnits="userSpaceOnUse">
          <rect width="2" height="2" fill="#3d4855" />
        </pattern>
        <pattern id="major" x="95" y="168" width="390" height="390" patternUnits="userSpaceOnUse">
          <rect width="3" height="2" fill="#8d949c" />
        </pattern>
      </defs>
      <rect width="100%" height="100%" fill="url(#dots)" />
      <rect width="100%" height="100%" fill="url(#major)" />
      <g transform="translate(-65 -195)" fill="none">
        <path d="M362 203.5h120M421.5 195v70" stroke="#8b9096" strokeWidth="1.5" />
        <path d="M1329 900v241H552V363L700 327" stroke="#d0d2cd" strokeWidth="4.5" />
        <g stroke="#b5303a" strokeWidth="1.5">
          <path d="M577 376h728v743H577z" />
          {range(36).map((i) => <path key={`l${i}`} d={`M577 ${402 + i * 20}l20-13M1285 ${393 + i * 20}l20-13`} />)}
          {range(25).map((i) => <path key={`b${i}`} d={`M${584 + i * 28} 1119l18-14M${602 + i * 28} 390l18-13`} />)}
        </g>
        <g stroke="#d01010" strokeWidth="1.5">
          <circle cx="551" cy="1141" r="24" />
          <path d="M527 1141h48M551 1117v48" />
        </g>

        <path d="M831 980v116h239V980" stroke="#ff26e2" strokeWidth="1.5" />
        <path d="M852 980v72l25 22h173V980" stroke="#afafaf" strokeWidth="4" />
        <path d="M937 1002v26q0 12-8 14M952 1012l14-10v42M952 1044h22" stroke="#afafaf" strokeWidth="5" />
        <path d="M850 1022v54h53M951 980v96h101V980" stroke="#f2eda1" strokeWidth="5" />
        <path d="M859 980v79q0 6 6 6h71q6 0 6-6V980" stroke="#d0a62c" strokeWidth="1.5" />
        <path d="M867 992h67v67h-67z" fill="#e3b72f" />
        <circle cx="900.5" cy="1025" r="20" fill="#001023" />
        <circle cx="999.5" cy="1024.5" r="40" stroke="#d0a62c" strokeWidth="1.5" />
        <circle cx="999.5" cy="1024.5" r="27" stroke="#e3b72f" strokeWidth="14" fill="#001023" />
        <g fontFamily="DejaVu Sans Mono">
          <g fill="#f1ebdc" textAnchor="middle">
            <text x="901" y="1020" fontSize="30">1</text>
            <text x="1000" y="1020" fontSize="30">2</text>
            <text x="901" y="1051" fontSize="22">+5V</text>
            <text x="1000" y="1051" fontSize="20">GND</text>
          </g>
          <text x="746" y="1043" fontSize="58" fill="#f2eda1" stroke="#f2eda1">J1</text>
          <text transform="translate(1110 1249) rotate(-90)" fontSize="57" fill="#afafaf" stroke="#afafaf">PinHeader</text>
        </g>
      </g>
    </svg>
  </main>
);

/* ---------- appearance panel ---------- */

const Eye = () => (
  <svg viewBox="0 0 24 24" className="size-6">
    <circle cx="12" cy="12" r="12" fill="#4f4f4f" />
    <path d="M2.5 12Q12 1.5 21.5 12 12 22.5 2.5 12z" fill="#f4f4f4" />
    <circle cx="12" cy="12" r="2.7" fill="none" stroke="#4f4f4f" strokeWidth="1.3" />
  </svg>
);

const LayerList = () => (
  <div className="flex min-h-0 flex-1 basis-0">
    <ul className="min-h-0 flex-1 overflow-hidden bg-[#f0f0f0]">
      {layers.map(([name, color], i) => (
        <li key={name} className={`flex h-[27px] items-center ${i === 0 ? 'bg-[#e1e1e1]' : ''}`}>
          <span className="flex w-[26px] justify-center">
            {i === 0 && <svg viewBox="0 0 8 14" className="h-[14px] w-2"><path d="M0 0l8 7-8 7z" fill="#4040ff" /></svg>}
          </span>
          <span className="h-[17px] w-[21px]" style={{ backgroundColor: color }} />
          <button type="button" aria-label={`${name} 표시`} className="mr-2 ml-[9px]"><Eye /></button>
          <span className="pb-[2px] text-[16px]">{name}</span>
        </li>
      ))}
    </ul>
    <div className="flex w-6 shrink-0 flex-col bg-[#f0f0f0]">
      <button type="button" aria-label="위로" className="flex h-[26px] items-center justify-center"><ChevronUp className="size-4 text-[#444]" strokeWidth={3} /></button>
      <div className="flex-[513] bg-[#cdcdcd]" />
      <div className="flex-[105]" />
      <button type="button" aria-label="아래로" className="flex h-6 items-center justify-center"><ChevronDown className="size-4 text-[#444]" strokeWidth={3} /></button>
    </div>
  </div>
);

const SidePanel = () => (
  <aside className="flex w-[405px] shrink-0 flex-col">
    <h2 className="h-[29px] bg-[#bababa] pl-[5px] leading-[26px]"><Ko>형상</Ko></h2>
    <div className="mt-2 flex h-[34px] items-end" role="tablist">
      <button type="button" role="tab" aria-selected="true" className="h-[34px] w-[76px] border border-b-0 border-[#dcdcdc] bg-white pb-[7px] text-[19px]">레이어</button>
      <button type="button" role="tab" className="h-[30px] w-[70px] border border-b-0 border-l-0 border-[#dcdcdc] pb-[5px] pl-2 text-left text-[19px]">객체</button>
      <button type="button" role="tab" className="h-[30px] w-[70px] border border-b-0 border-l-0 border-[#dcdcdc] pb-[5px] pl-[10px] text-left text-[19px]">네트</button>
    </div>
    <div className="mr-[5px] flex min-h-0 flex-1 flex-col border border-[#dcdcdc] bg-white pt-px pr-[2px] pl-1">
      <LayerList />
      <button type="button" className="flex h-[37px] items-center pb-[7px] pl-[17px] text-[18px]">
        <svg viewBox="0 0 6 10" className="mr-1 h-[10px] w-[6px]"><path d="M0 0l6 5-6 5z" /></svg>
        레이어 표시 옵션
      </button>
    </div>
    <div className="flex flex-col px-[10px] pt-2 pb-[14px] text-[17px] leading-[26px]">
      <span>사전 설정 (Ctrl+Tab):</span>
      <Dropdown label="사전 설정" value="---" className="mt-[2px] mb-[3px]" />
      <span>뷰포트(Shift+Tab):</span>
      <Dropdown label="뷰포트" value="---" className="mt-px" />
    </div>
    <h2 className="h-9 border-t-[6px] border-[#dcdcdc] bg-[#bababa] pl-[5px] leading-[28px]"><Ko>선택 필터</Ko></h2>
    <div className="grid grid-cols-[112px_1fr] pt-2 pr-2 pb-[9px] pl-[7px]">
      {filters.map((f) => <CheckItem key={f} label={f} checked small className="h-[22px] leading-[22px]" />)}
    </div>
  </aside>
);

/* ---------- bottom bars ---------- */

const Grip = () => (
  <svg viewBox="0 0 14 14" className="mb-1 size-[14px]">
    <path d="M10 0h3v3h-3zM10 5h3v3h-3zM5 5h3v3H5zM10 10h3v3h-3zM5 10h3v3H5zM0 10h3v3H0z" fill="#bdbdbd" />
  </svg>
);

const BottomBars = () => (
  <footer>
    <div className="flex h-[47px] border-t border-[#d5d5d5] pl-4">
      {counts.map(([name, n, w]) => (
        <div key={name} className={`${w} shrink-0 leading-[22px]`}>
          <div className="h-[23px]"><Ko>{name}</Ko></div>
          <div>{n}</div>
        </div>
      ))}
    </div>
    <div className="flex h-[34px] items-stretch border-t border-[#d5d5d5] leading-[32px] whitespace-pre">
      <div className="w-[491px] pl-[2px]"><Ko>선택 및 배치를 위한 부품 배치 파일 생성</Ko></div>
      <div className="w-[127px] border-l border-[#d5d5d5] pl-[6px] text-[19px]">Z 7.24</div>
      <div className="w-[269px] border-l border-[#d5d5d5] pl-[6px] text-[19px]">X -3.3000  Y 24.1000</div>
      <div className="w-[423px] border-l border-[#d5d5d5] pl-[6px] text-[19px]">dx 76.7000  dy -105.9000  dist 130.7582</div>
      <div className="w-[308px] border-l border-[#d5d5d5] pl-[6px] text-[19px]">grid X 0.1000  Y 0.1000</div>
      <div className="w-[83px] border-l border-[#d5d5d5] pl-[6px] text-[19px]">mm</div>
      <div className="flex-1 border-l border-[#d5d5d5]" />
      <div className="flex w-[311px] items-end justify-between border-l border-[#d5d5d5] pr-1 pl-[7px]">
        <span><Ko>수평, 수직, 45도 각도로 제한</Ko></span>
        <Grip />
      </div>
    </div>
  </footer>
);

/* ---------- placement file dialog ---------- */

const CountBadge = () => (
  <span className="ml-[14px] flex h-6 w-7 items-center justify-center rounded-full bg-[#008000] text-[17px] font-bold text-white">0</span>
);

const PlacementDialog = () => (
  <div className="absolute top-[212px] left-[693px] z-10 w-[1031px] border-8 border-[#ff7f27] bg-[#001023] pl-[3px]">
    <section role="dialog" aria-label="부품 배치 파일 생성" className="bg-[#f0f0f0]">
      <div className="flex h-[46px] items-center justify-between bg-white pr-[13px] pb-[2px] pl-3">
        <span><Ko>부품 배치 파일 생성</Ko></span>
        <button type="button" aria-label="대화 상자 닫기"><svg viewBox="0 0 16 16" className="size-4"><path d="m0 0 16 16M16 0 0 16" stroke="#000" strokeWidth="1.3" /></svg></button>
      </div>
      <form className="pt-[15px] pr-[13px] pb-[9px] pl-[15px]" onSubmit={(e) => e.preventDefault()}>
        <div className="flex h-[34px] items-center">
          <label htmlFor="outdir" className="w-[126px] shrink-0"><Ko>출력 디렉토리:</Ko></label>
          <input id="outdir" type="text" className="h-[34px] min-w-0 flex-1 border border-[#7a7a7a] bg-white px-1" />
          <button type="button" aria-label="찾아보기" className="ml-[2px] flex h-[33px] w-[34px] items-center justify-center border border-[#adadad] bg-[#e1e1e1]">
            <svg viewBox="0 0 24 20" className="h-[19px] w-[22px]"><path d="M1 3a2 2 0 0 1 2-2h6l2 3h10a2 2 0 0 1 2 2v11a2 2 0 0 1-2 2H3a2 2 0 0 1-2-2z" fill="#505050" /></svg>
          </button>
        </div>

        <div className="mt-6 grid grid-cols-3 gap-[15px]">
          <RadioGroup name="format" title="형식" options={['ASCII', 'CSV', '거버 (실험적 요소)']} value="CSV" />
          <RadioGroup name="units" title="단위" options={['Inch', 'mm']} value="mm" />
          <RadioGroup name="files" title="파일" options={['전면과 후면을 별도의 파일로 분리', '보드에 대하여 단 하나의 파일']} value="보드에 대하여 단 하나의 파일" />
        </div>

        <div className="mt-[13px]">
          <CheckItem className="h-[30px]" label="SMD 풋프린트만 포함" />
          <CheckItem className="h-[30px]" label="스루홀 패드가 존재하는 모든 풋프린트를 제외" />
          <CheckItem className="h-[30px]" label="보드 에지 레이어 포함" disabled />
          <CheckItem className="h-[30px]" label="드릴/배치 파일 원점 사용" checked />
          <CheckItem className="h-[30px]" label="하단 레이어의 풋 프린트에 음수 X 좌표 사용" />
        </div>

        <fieldset className="mt-[9px] border border-[#dcdcdc] px-[10px] pb-[14px]">
          <legend className="ml-[2px] h-6 px-[2px] leading-[23px]"><Ko>출력 메시지</Ko></legend>
          <div className="mt-[3px] h-[190px] bg-white pt-4 pl-[15px] font-['Liberation_Sans','Noto_Sans_CJK_KR',sans-serif] text-[21px] leading-[20px] whitespace-nowrap">
            <p>배치 파일: 'C:₩Users₩jhcho₩Documents₩My_KiCad_Tutorial₩test₩test₩test-all-pos.csv'.</p>
            <p>컴포넌트 수: 3.</p>
            <p>파일 생성 성공.</p>
          </div>
          <div className="mt-[9px] flex h-[31px] items-center">
            <span className="w-[50px]"><Ko>표시:</Ko></span>
            <CheckItem className="w-[114px]" label="모두" />
            <div className="flex w-[134px] items-center"><CheckItem label="오류" checked /><CountBadge /></div>
            <div className="flex w-[133px] items-center"><CheckItem label="경고" checked /><CountBadge /></div>
            <CheckItem className="w-[114px]" label="조치" checked />
            <CheckItem label="정보" checked />
            <button type="button" className="mr-[6px] ml-auto h-[31px] w-[109px] border border-[#adadad] bg-[#e1e1e1] leading-[26px]"><Ko>저장...</Ko></button>
          </div>
        </fieldset>

        <div className="mt-5 flex justify-end gap-4">
          <button type="submit" className="h-[31px] w-[148px] border-2 border-[#0078d7] bg-[#e5f1fb] p-px leading-6">
            <span className="block h-[25px] border border-dotted border-[#333] leading-[20px]"><Ko>배치 파일 생성</Ko></span>
          </button>
          <button type="button" className="h-[31px] w-[109px] border border-[#adadad] bg-[#e1e1e1] leading-[26px]"><Ko>닫기</Ko></button>
        </div>
      </form>
      <div className="absolute right-[2px] -bottom-px"><Grip /></div>
    </section>
  </div>
);

/* ---------- hand-drawn step marks ---------- */

const StepMarks = () => (
  <svg width="2293" height="1398" fill="none" className="pointer-events-none absolute top-0 left-0 z-40" strokeLinecap="round" strokeLinejoin="round" aria-hidden="true">
    <g stroke="#ff7f27" strokeWidth="7">
      <path d="M697 212 681 370 665 514M665 562 679 750 696 980" />
    </g>
    <path d="M662 552h7v8h-7zM690 977h7v8h-7z" fill="#fff" stroke="#333" strokeWidth="1.5" />
    <g stroke="#ed1c24" strokeWidth="6">
      <path d="M92 34 89 48 83 64M96 60v.5" />
      <path d="M13 83h17l2-2h62" />
      <path d="M188 409l9-4 9 1 4 6-3 8-4 9 10-5 14-4M236 420v.5" />
      <path d="M39 466h17l3-3h119l3 2h35" />
      <path d="M541 498l9-3 9 1 4 5-4 8-7 4 14-1 7 4 1 14-4 8-7 2-5-3-5-6M587 533v.5" />
      <path d="M372 557h192l10 3h24" />
      <path d="M718 321h106l34 2h69" />
      <path d="M729 436l21-1 15-2h20" />
      <path d="M1063 439h47l25-3 24-1" />
      <path d="M1406 440l10-2h60l20-2h37l30-3h65" />
      <path d="M721 616l67-3 75-3h97" />
      <path d="M1386 914l-11 12-6 13 33-3M1385 914l-1 30-4 29M1399 957v.5" />
      <path d="M1471 923l3 11 18-19" strokeWidth="7" />
      <path d="M1431 974l24 4h80l58-1" />
    </g>
  </svg>
);

const App = () => (
  <div className="relative flex min-h-screen min-w-[2000px] flex-col bg-[#e4e4e4] px-2 pt-[6px] pb-[9px] font-['Noto_Sans_CJK_KR','Noto_Sans',sans-serif] text-[18px] leading-6 text-[#111]">
    <div className="flex flex-1 flex-col border border-[#777] bg-[#f0f0f0] shadow-[0_2px_10px_rgba(0,0,0,0.35)]">
      <TitleBar />
      <MenuBar />
      <MainToolbar />
      <OptionsToolbar />
      <div className="flex flex-1 border-t border-[#a0a0a0]">
        <LeftToolbar />
        <Board />
        <RightToolbar />
        <div className="w-[6px] shrink-0 bg-[#dcdcdc]" />
        <SidePanel />
      </div>
      <BottomBars />
    </div>
    <PlacementDialog />
    <StepMarks />
  </div>
);

export default App;
